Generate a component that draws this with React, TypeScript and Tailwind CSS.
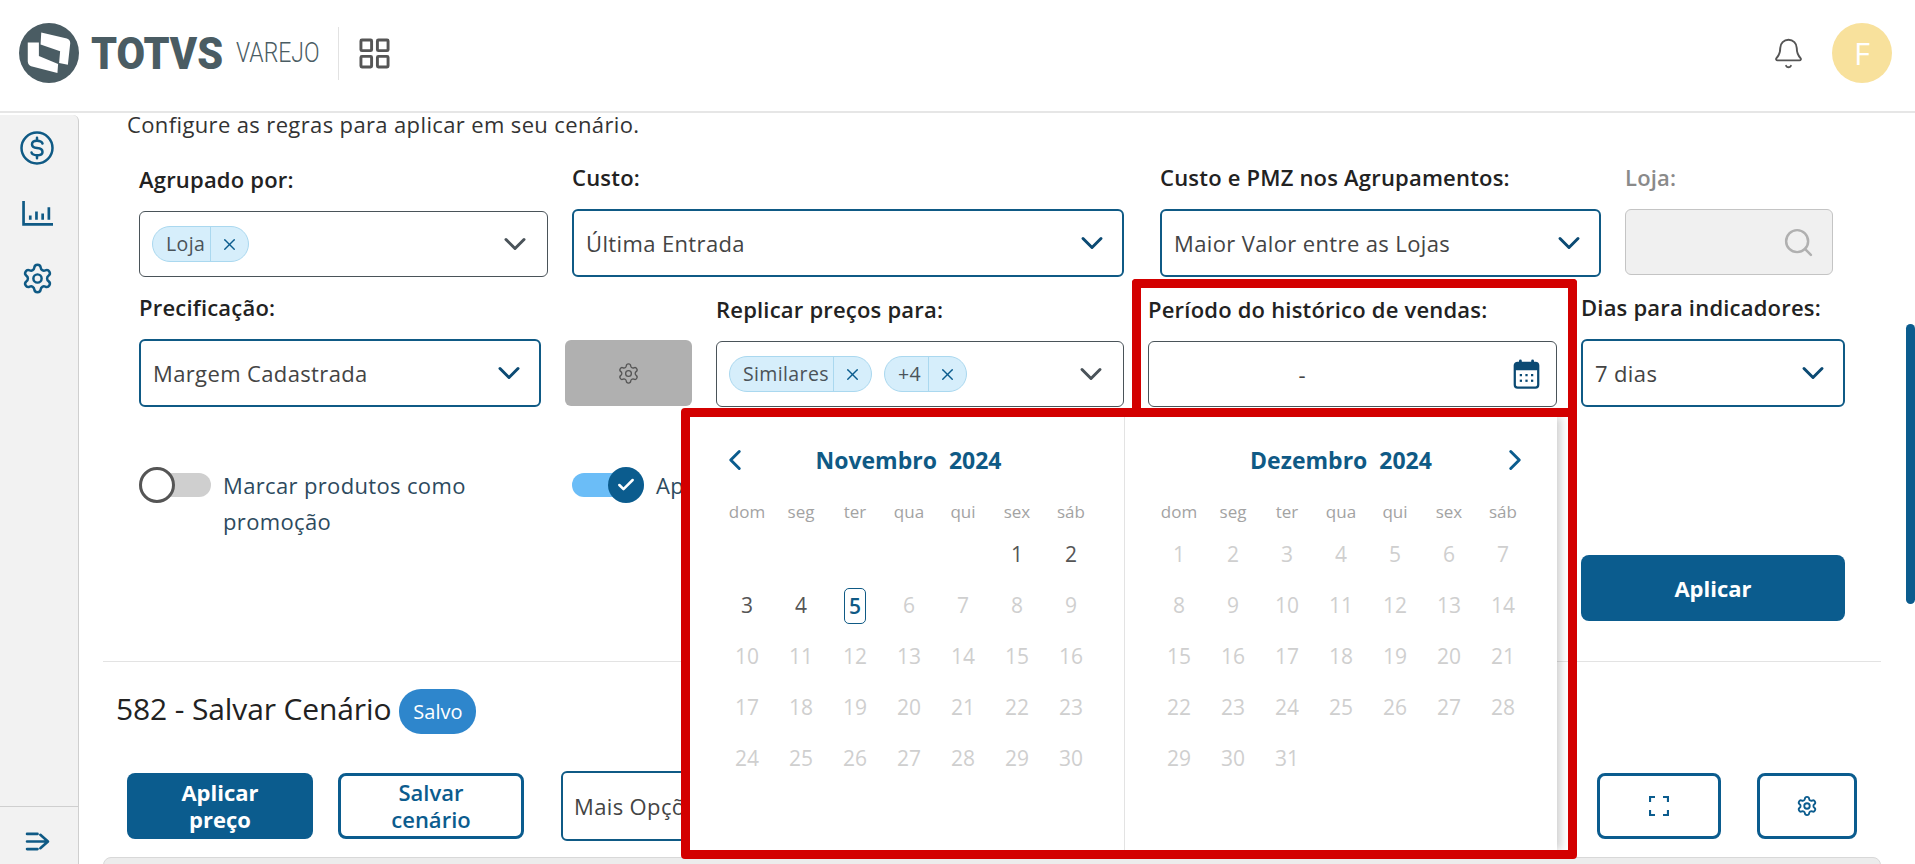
import React from 'react';
import { Bell, Check, ChevronDown, ChevronLeft, ChevronRight, Search, Settings, X } from 'lucide-react';

const weekDays = ['dom', 'seg', 'ter', 'qua', 'qui', 'sex', 'sáb'];

const TotvsLogo = () => (
  <svg viewBox="0 0 178 178" className="w-[60px] h-[60px] shrink-0">
    <circle cx="89" cy="89" r="89" fill="#4a5c63" />
    <path d="M66 28 L142 46 Q152 49 152 60 L145 124 L119 119 L122 84 L64 64 Z" fill="#fff" />
    <path d="M26 58 L59 58 L59 98 L116 122 L114 148 L36 128 Q27 125 26 114 Z" fill="#fff" />
  </svg>
);

const CalendarIcon = () => (
  <svg viewBox="0 0 28 32" className="w-[27px] h-[30px]">
    <rect x="6" y="0.5" width="3" height="6" rx="1.5" fill="#0b4a73" />
    <rect x="19" y="0.5" width="3" height="6" rx="1.5" fill="#0b4a73" />
    <rect x="1.5" y="4" width="25" height="26.5" rx="3" fill="none" stroke="#0b4a73" strokeWidth="2.4" />
    <rect x="1.5" y="4" width="25" height="8" rx="2" fill="#0b4a73" />
    {[8, 14, 20].map((x) => (
      <React.Fragment key={x}>
        <rect x={x - 1.2} y="16" width="2.4" height="2.4" fill="#0b4a73" />
        <rect x={x - 1.2} y="22" width="2.4" height="2.4" fill="#0b4a73" />
      </React.Fragment>
    ))}
  </svg>
);

const Label = ({ children, muted }: { children: React.ReactNode; muted?: boolean }) => (
  <div className={`h-[28px] mb-[15px] text-[22px] leading-[23px] font-[550] tracking-[0.2px] whitespace-nowrap ${muted ? 'text-[#8a8a8a]' : 'text-[#222]'}`}>
    {children}
  </div>
);

const Chip = ({ text, textWidth }: { text: string; textWidth: string }) => (
  <div className="flex items-center h-[36px] rounded-full bg-[#d6eefb] border border-[#aad8ef] text-[#4a5359] text-[19.5px]">
    <div className={`${textWidth} pl-[13px] leading-[34px] border-r border-[#aad8ef]`}>{text}</div>
    <div className="w-[37px] flex justify-center">
      <X size={19} strokeWidth={1.8} color="#0b5c8e" />
    </div>
  </div>
);

const SelectField = ({ value, children, dark }: { value?: string; children?: React.ReactNode; dark?: boolean }) => (
  <div className={`flex items-center rounded-[6px] bg-white pl-[12px] ${dark ? 'h-[66px] pr-[14px] border border-[#4a5359]' : 'h-[68px] pr-[12px] border-2 border-[#0f5a85]'}`}>
    <div className="flex-1 flex items-center gap-[12px] text-[22px] tracking-[0.37px] text-[#444] whitespace-nowrap overflow-hidden">
      {value}
      {children}
    </div>
    <ChevronDown size={36} strokeWidth={2} color={dark ? '#4a5359' : '#0b4a73'} />
  </div>
);

const Month = ({ title, days, offset, active, prev, next, className }: {
  title: string;
  days: number;
  offset: number;
  active: number[];
  prev?: boolean;
  next?: boolean;
  className: string;
}) => {
  const cells: (number | null)[] = [...Array(offset).fill(null), ...Array.from({ length: days }, (_, i) => i + 1)];
  return (
    <div className={className}>
      <div className="h-[32px] mt-[27px] flex items-center justify-between relative">
        <div className="w-[30px]">{prev && <ChevronLeft size={34} strokeWidth={2.1} color="#0b5c8e" className="ml-[-2px]" />}</div>
        <div className="absolute inset-x-0 text-center text-[23px] font-bold text-[#0f5a85] whitespace-pre">{title}</div>
        <div className="w-[34px] mr-[-2px]">{next && <ChevronRight size={34} strokeWidth={2.1} color="#0b5c8e" />}</div>
      </div>
      <div className="grid grid-cols-[repeat(7,54px)] mt-[24px] h-[24px] text-center text-[17px] leading-[24px] text-[#a3a3a3]">
        {weekDays.map((d) => <div key={d}>{d}</div>)}
      </div>
      <div className="grid grid-cols-[repeat(7,54px)] auto-rows-[51px] mt-[5px] text-center text-[21px]">
        {cells.map((d, i) => (
          <div key={i} className="flex items-center justify-center">
            {d === 5 && active.includes(5) ? (
              <span className="w-[22px] h-[36px] rounded-[5px] border border-[#0f5a85] text-[#0f5a85] font-semibold leading-[34px]">5</span>
            ) : (
              <span className={d && active.includes(d) ? 'text-[#555]' : 'text-[#cfcfcf]'}>{d}</span>
            )}
          </div>
        ))}
      </div>
    </div>
  );
};

export default function App() {
  return (
    <div className="relative h-[864px] w-full overflow-hidden bg-white flex flex-col font-['Open_Sans','Noto_Sans',sans-serif]">
      <header className="h-[113px] shrink-0 flex items-center border-b-2 border-[#e6e6e6] bg-white pl-[19px] pr-[23px] pb-[5px]">
        <TotvsLogo />
        <div className="ml-[12px] w-[131px] shrink-0">
          <span className="inline-block origin-left scale-x-[0.92] text-[45px] leading-none font-['Roboto',sans-serif] font-black text-[#4a5c63]">TOTVS</span>
        </div>
        <div className="ml-[14px] w-[85px] shrink-0">
          <span className="inline-block origin-left scale-x-[0.82] text-[28px] leading-none font-['Roboto',sans-serif] font-light text-[#4a5c63]">VAREJO</span>
        </div>
        <div className="ml-[17px] h-[53px] w-px bg-[#e2e2e2]" />
        <svg viewBox="0 0 32 32" className="ml-[20px] w-[31px] h-[31px]" fill="none" stroke="#555" strokeWidth="3">
          <rect x="2" y="2" width="11" height="11" rx="1" />
          <rect x="19" y="2" width="11" height="11" rx="1" />
          <rect x="2" y="19" width="11" height="11" rx="1" />
          <rect x="19" y="19" width="11" height="11" rx="1" />
        </svg>
        <div className="ml-auto flex items-center gap-[27px]">
          <Bell size={33} strokeWidth={1.4} color="#555" />
          <div className="w-[60px] h-[60px] rounded-full bg-[#f8e19c] text-white text-[31px] flex items-center justify-center">F</div>
        </div>
      </header>

      <div className="flex-1 flex min-h-0">
        <aside className="w-[79px] shrink-0 mt-[2px] bg-[#f2f2f2] border-r border-[#cfcfcf] rounded-tr-[6px] flex flex-col items-center text-[#0f5a85]">
          <div className="pr-[4px] flex flex-col items-center">
            <svg viewBox="0 0 34 34" className="w-[34px] h-[34px] mt-[16px]" fill="none" stroke="#0f5a85" strokeWidth="2.5" strokeLinecap="round">
              <circle cx="17" cy="17" r="15.5" />
              <path d="M22.5 12.5 Q21.5 9.8 17 9.8 Q12 9.8 12 13.3 Q12 16.6 17 17 Q22.5 17.5 22.5 20.9 Q22.5 24.2 17 24.2 Q12 24.2 11.5 21.4" />
              <path d="M17 6.8 V9.8 M17 24.2 V27.2" />
            </svg>
            <svg viewBox="0 0 30 24" className="w-[31px] h-[25px] mt-[36px]" fill="none" stroke="#0f5a85" strokeWidth="2.6">
              <path d="M1.5 0 V22.5 H30" />
              <path d="M8 14 V18 M14 10 V18 M20 12 V18 M26 6 V18" />
            </svg>
            <Settings size={33} strokeWidth={1.8} className="mt-[36px]" />
          </div>
          <div className="mt-auto w-full border-t border-[#cfcfcf] h-[58px] flex items-center justify-center pt-[12px] pr-[4px]">
            <svg viewBox="0 0 26 20" className="w-[25px] h-[19px]" fill="none" stroke="#0f5a85" strokeWidth="2.8" strokeLinecap="round" strokeLinejoin="round">
              <path d="M2 2 H13 M2 10 H23 M2 18 H13 M16 3 L24 10 L16 17" />
            </svg>
          </div>
        </aside>

        <main className="flex-1 min-w-0">
          <p className="ml-[48px] mt-[-3px] h-[28px] text-[22px] tracking-[0.37px] leading-[28px] text-[#333] whitespace-nowrap">Configure as regras para aplicar em seu cenário.</p>

          <div className="flex ml-[60px] mt-[28px]">
            <div className="w-[409px] pt-[2px]">
              <Label>Agrupado por:</Label>
              <SelectField dark>
                <Chip text="Loja" textWidth="w-[58px]" />
              </SelectField>
            </div>
            <div className="w-[552px] ml-[24px]">
              <Label>Custo:</Label>
              <SelectField value="Última Entrada" />
            </div>
            <div className="w-[441px] ml-[36px]">
              <Label>Custo e PMZ nos Agrupamentos:</Label>
              <SelectField value="Maior Valor entre as Lojas" />
            </div>
            <div className="w-[208px] ml-[24px]">
              <Label muted>Loja:</Label>
              <div className="h-[66px] rounded-[6px] bg-[#f0f0f0] border border-[#c4c4c4] flex items-center justify-end pr-[17px]">
                <Search size={33} strokeWidth={1.8} color="#b0b0b0" />
              </div>
            </div>
          </div>

          <div className="flex ml-[60px] mt-[19px]">
            <div className="w-[402px]">
              <Label>Precificação:</Label>
              <SelectField value="Margem Cadastrada" />
            </div>
            <div className="w-[127px] ml-[24px] h-[66px] self-end mb-[1px] rounded-[6px] bg-[#b0b0b0] flex items-center justify-center">
              <Settings size={23} strokeWidth={1.4} color="#555" />
            </div>
            <div className="w-[408px] ml-[24px] pt-[2px]">
              <Label>Replicar preços para:</Label>
              <SelectField dark>
                <Chip text="Similares" textWidth="w-[104px]" />
                <Chip text="+4" textWidth="w-[44px]" />
              </SelectField>
            </div>
            <div className="w-[409px] ml-[24px] pt-[2px]">
              <Label>Período do histórico de vendas:</Label>
              <div className="h-[66px] rounded-[6px] border border-[#4a5359] bg-white flex items-center pr-[16px]">
                <div className="flex-1 text-center text-[22px] text-[#444] pr-[58px]">-</div>
                <CalendarIcon />
              </div>
            </div>
            <div className="w-[264px] ml-[24px]">
              <Label>Dias para indicadores:</Label>
              <SelectField value="7 dias" />
            </div>
          </div>

          <div className="flex ml-[60px] mt-[60px]">
            <div className="w-[433px] flex items-start">
              <div className="relative w-[72px] h-[24px] mt-[6px] rounded-full bg-[#cfcfcf] shrink-0">
                <div className="absolute left-0 top-[-6px] w-[36px] h-[36px] rounded-full bg-white border-[3px] border-[#555]" />
              </div>
              <div className="ml-[12px] w-[320px] text-[22px] tracking-[0.35px] leading-[36px] text-[#2d4a5e]">Marcar produtos como promoção</div>
            </div>
            <div className="w-[1009px] flex items-start">
              <div className="relative w-[72px] h-[24px] mt-[6px] rounded-full bg-[#6bbdf7] shrink-0">
                <div className="absolute right-0 top-[-6px] w-[36px] h-[36px] rounded-full bg-[#0b5c8e] flex items-center justify-center">
                  <Check size={20} strokeWidth={3} color="#fff" />
                </div>
              </div>
              <div className="ml-[12px] w-[300px] text-[22px] tracking-[0.35px] leading-[36px] text-[#2d4a5e]">Aplicar regras de preço</div>
            </div>
            <button className="w-[264px] h-[66px] mt-[88px] rounded-[8px] bg-[#0b5c8e] text-white text-[22px] font-bold">Aplicar</button>
          </div>

          <div className="ml-[24px] mr-[34px] mt-[40px] border-t border-[#e3e3e3]" />

          <div className="flex items-center ml-[37px] mt-[27px] h-[45px]">
            <h2 className="mb-[6px] text-[30px] tracking-[-0.12px] font-medium text-[#222]">582 - Salvar Cenário</h2>
            <span className="ml-[8px] w-[77px] h-[45px] rounded-[22px] bg-[#2e86cc] text-white text-[20px] flex items-center justify-center">Salvo</span>
          </div>

          <div className="flex items-center ml-[48px] mt-[37px] h-[70px]">
            <button className="w-[186px] h-[66px] rounded-[8px] bg-[#0b5c8e] text-white text-[22px] leading-[27px] font-bold">Aplicar<br />preço</button>
            <button className="w-[186px] h-[66px] ml-[25px] rounded-[8px] border-[3px] border-[#0b5c8e] text-[#0b5c8e] text-[22px] leading-[27px] font-semibold">Salvar<br />cenário</button>
            <div className="w-[990px] h-[70px] ml-[37px] rounded-[6px] border-2 border-[#0f5a85] flex items-center px-[11px] text-[22px] tracking-[0.37px] text-[#444]">Mais Opções</div>
            <button className="w-[124px] h-[66px] ml-[46px] rounded-[8px] border-[3px] border-[#0b5c8e] flex items-center justify-center">
              <svg viewBox="0 0 20 20" className="w-[20px] h-[20px]" fill="none" stroke="#0b5c8e" strokeWidth="2.2">
                <path d="M1 6 V1 H6 M14 1 H19 V6 M1 14 V19 H6 M14 19 H19 V14" />
              </svg>
            </button>
            <button className="w-[100px] h-[66px] ml-[36px] rounded-[8px] border-[3px] border-[#0b5c8e] flex items-center justify-center">
              <Settings size={22} strokeWidth={2} color="#0b5c8e" />
            </button>
          </div>

          <div className="ml-[24px] mr-[34px] mt-[16px] h-[20px] rounded-t-[8px] bg-[#ececec] border border-[#d8d8d8]" />
        </main>
      </div>

      {/* scrollbar */}
      <div className="absolute right-0 top-[324px] w-[9px] h-[280px] rounded-[5px] bg-[#0b5c8e]" />

      {/* highlight boxes */}
      <div className="absolute left-[690px] top-[417px] w-[867px] h-[433px] bg-white flex shadow-[4px_0_8px_rgba(0,0,0,0.18)]">
        <Month title="Novembro  2024" days={30} offset={5} active={[1, 2, 3, 4, 5]} prev className="w-[435px] pl-[30px] pr-[27px] border-r border-[#e3e3e3]" />
        <Month title="Dezembro  2024" days={31} offset={0} active={[]} next className="w-[432px] pl-[27px] pr-[27px]" />
      </div>
      <div className="absolute left-[1132px] top-[279px] w-[445px] h-[138px] border-[9px] border-b-0 border-[#d30000] rounded-t-[4px]" />
      <div className="absolute left-[681px] top-[408px] w-[896px] h-[451px] border-[9px] border-[#d30000] rounded-[4px]" />
    </div>
  );
}
